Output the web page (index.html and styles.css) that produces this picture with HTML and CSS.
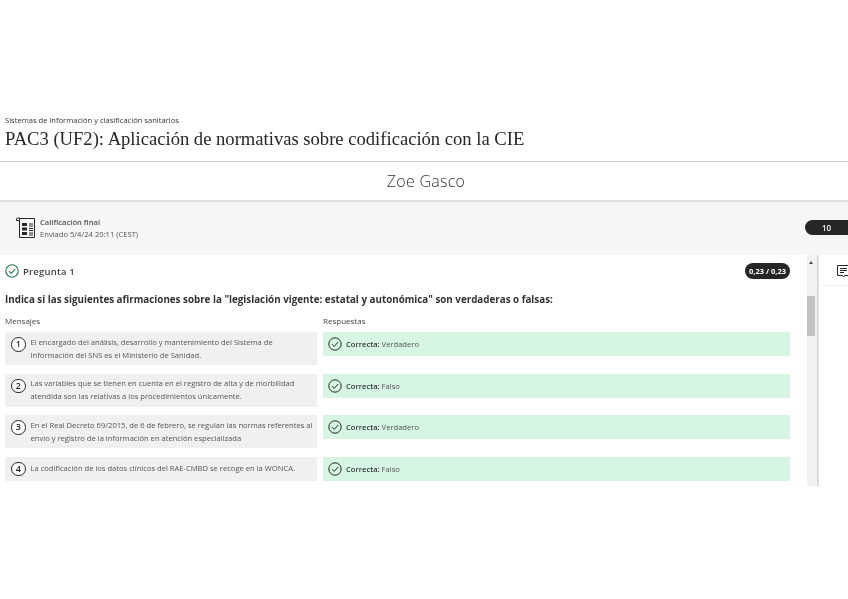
FILE: index.html
```html
<!DOCTYPE html>
<html lang="es">
<head>
<meta charset="utf-8">
<title>PAC3 (UF2)</title>
<link rel="stylesheet" href="styles.css">
</head>
<body>
<header class="head">
  <p class="course">Sistemas de información y clasificación sanitarios</p>
  <h1 class="title">PAC3 (UF2): Aplicación de normativas sobre codificación con la CIE</h1>
</header>
<div class="student">Zoe Gasco</div>
<section class="grade">
  <svg class="grade-icon" width="21" height="21" viewBox="0 0 21 21" fill="none" stroke="#262626">
    <path d="M4.500 1.500H19.500V20.500H4.500V3.500M1.500 3.500V1.800Q1.500 1 2.500 1H4.500V3.500Z" stroke-width="1"/>
    <path d="M7 6h5v3H7zM7 10.500h5v3H7zM7 15h5v3H7z" fill="#262626" stroke="none"/>
    <path d="M14 7h4M14 9h4M14 11.500h4M14 13.500h4M14 16h4M14 18h4" stroke-width="1"/>
  </svg>
  <div class="grade-text">
    <div class="grade-label">Calificación final</div>
    <div class="grade-date">Enviado 5/4/24 20:11 (CEST)</div>
  </div>
  <span class="grade-pill">10</span>
</section>
<div class="workspace">
  <main class="question">
    <div class="q-head">
      <svg class="check" width="14" height="14" viewBox="0 0 14 14" fill="none" stroke="#1f7a4d" stroke-width="1.100"><circle cx="7" cy="7" r="6.200"/><path d="M4 7.200l2.200 2.200L10.200 5"/></svg>
      <span class="q-name">Pregunta 1</span>
      <span class="q-pill">0,23 / 0,23</span>
    </div>
    <h2 class="q-text">Indica si las siguientes afirmaciones sobre la "legislación vigente: estatal y autonómica" son verdaderas o falsas:</h2>
    <div class="match">
      <div class="col-label">Mensajes</div>
      <div class="col-label">Respuestas</div>

      <div class="msg"><span class="num">1</span><span class="msg-text">El encargado del análisis, desarrollo y mantenimiento del Sistema de<br>Información del SNS es el Ministerio de Sanidad.</span></div>
      <div class="ans"><svg class="tick" viewBox="0 0 14 14" fill="none" stroke="#262626" stroke-width="1"><circle cx="7" cy="7" r="6.200"/><path d="M4 7.200l2.200 2.200L10.200 5"/></svg><span><span class="ok">Correcta:</span> Verdadero</span></div>

      <div class="msg"><span class="num">2</span><span class="msg-text">Las variables que se tienen en cuenta en el registro de alta y de morbilidad<br>atendida son las relativas a los procedimientos únicamente.</span></div>
      <div class="ans"><svg class="tick" viewBox="0 0 14 14" fill="none" stroke="#262626" stroke-width="1"><circle cx="7" cy="7" r="6.200"/><path d="M4 7.200l2.200 2.200L10.200 5"/></svg><span><span class="ok">Correcta:</span> Falso</span></div>

      <div class="msg"><span class="num">3</span><span class="msg-text">En el Real Decreto 69/2015, de 6 de febrero, se regulan las normas referentes al<br>envío y registro de la información en atención especializada</span></div>
      <div class="ans"><svg class="tick" viewBox="0 0 14 14" fill="none" stroke="#262626" stroke-width="1"><circle cx="7" cy="7" r="6.200"/><path d="M4 7.200l2.200 2.200L10.200 5"/></svg><span><span class="ok">Correcta:</span> Verdadero</span></div>

      <div class="msg"><span class="num">4</span><span class="msg-text">La codificación de los datos clínicos del RAE-CMBD se recoge en la WONCA.</span></div>
      <div class="ans"><svg class="tick" viewBox="0 0 14 14" fill="none" stroke="#262626" stroke-width="1"><circle cx="7" cy="7" r="6.200"/><path d="M4 7.200l2.200 2.200L10.200 5"/></svg><span><span class="ok">Correcta:</span> Falso</span></div>
    </div>
  </main>
  <div class="scrollbar"><span class="arrow"></span><span class="thumb"></span></div>
  <aside class="side">
    <div class="side-top">
      <svg class="note" width="13" height="14" viewBox="0 0 13 14" fill="none" stroke="#262626"><path d="M.5 1.500h12v10H7.500L6.500 13l-1-1.500H.5z"/><path d="M3 4.500h7M3 6.500h7M3 8.500h4" stroke-width="1.200"/></svg>
    </div>
  </aside>
</div>
</body>
</html>
```
FILE: styles.css
```css
* { box-sizing: border-box; }
html, body { margin: 0; padding: 0; }
body {
  width: 848px;
  height: 599px;
  overflow: hidden;
  background: #fff;
  color: #262626;
  font-family: "Open Sans", sans-serif;
  filter: blur(.35px);
}
.head {
  height: 162px;
  padding: 115px 0 0 5px;
  border-bottom: 1px solid #cdcdcd;
}
.course { margin: 0; font-size: 7.600px; line-height: 11px; color: #333; }
.title {
  margin: 2px 0 0;
  font-family: "Liberation Serif", serif;
  font-size: 18.600px;
  line-height: 22px;
  font-weight: 400;
  color: #262626;
}
.student {
  height: 38px;
  padding-left: 4px;
  text-align: center;
  font-size: 16px;
  font-weight: 300;
  line-height: 38px;
  color: #333;
  letter-spacing: .25px;
}
.grade {
  height: 55px;
  display: flex;
  align-items: center;
  padding: 0 0 2px 15px;
  background: #f6f6f6;
  border-top: 2px solid #dedede;
}
.grade-icon { margin-right: 4px; }
.grade-text { font-size: 7.600px; line-height: 12px; color: #555; }
.grade-label { font-weight: 600; }
.grade-pill {
  margin-left: auto;
  width: 43px;
  height: 15px;
  border-radius: 8px 0 0 8px;
  background: #262626;
  color: #fff;
  font-size: 8px;
  font-weight: 600;
  line-height: 15px;
  text-align: center;
}
.workspace { height: 231px; display: flex; overflow: hidden; }
.question { flex: none; width: 807px; padding: 8px 17px 0 5px; overflow: hidden; }
.q-head { height: 16px; display: flex; align-items: center; }
.check { flex: none; }
.q-name { margin-left: 4px; font-size: 9.500px; font-weight: 600; color: #444; letter-spacing: .2px; }
.q-pill {
  margin-left: auto;
  width: 45px;
  height: 16px;
  border-radius: 8px;
  background: #262626;
  color: #fff;
  font-size: 7.500px;
  font-weight: 700;
  line-height: 16px;
  text-align: center;
}
.q-text {
  margin: 13px 0 0;
  font-size: 9.800px;
  line-height: 15px;
  font-weight: 700;
  color: #333;
  white-space: nowrap;
}
.match {
  display: grid;
  grid-template-columns: 312px 467px;
  column-gap: 6px;
  row-gap: 8.500px;
  align-items: start;
  margin-top: 8px;
}
.col-label { font-size: 8px; line-height: 11px; color: #444; margin-bottom: -2.500px; }
.msg {
  display: flex;
  gap: 5px;
  padding: 3.500px 5px 3.500px 6px;
  min-height: 24px;
  background: #f0f0f0;
  font-size: 7.600px;
  line-height: 13px;
  color: #555;
}
.msg-text { align-self: center; white-space: nowrap; }
.num {
  flex: none;
  align-self: flex-start;
  margin-top: 1.500px;
  width: 14.500px;
  height: 14.500px;
  border: 1.300px solid #262626;
  border-radius: 50%;
  font-size: 9px;
  font-weight: 600;
  line-height: 12px;
  text-align: center;
  color: #262626;
  background: #fff;
}
.ans {
  height: 24px;
  display: flex;
  align-items: center;
  gap: 4px;
  padding-left: 5px;
  background: #d6f6e3;
  font-size: 7.600px;
  color: #555;
}
.ok { font-weight: 600; color: #333; }
.tick { width: 14px; height: 14px; flex: none; }
.scrollbar {
  flex: none;
  width: 12px;
  display: flex;
  flex-direction: column;
  align-items: center;
  padding: 0 2px 0 0;
  background: #f1f1f1;
  border-right: 2px solid #dcdcdc;
}
.arrow {
  margin-top: 6px;
  width: 0;
  height: 0;
  border-left: 2.500px solid transparent;
  border-right: 2.500px solid transparent;
  border-bottom: 3px solid #505050;
}
.thumb { margin-top: 32px; width: 8px; height: 40px; background: #c1c1c1; }
.side { flex: 1; min-width: 0; overflow: hidden; }
.side-top { height: 31px; padding: 9px 0 0 18px; border-bottom: 1px solid #f3f3f3; }
.note { display: block; }
```
